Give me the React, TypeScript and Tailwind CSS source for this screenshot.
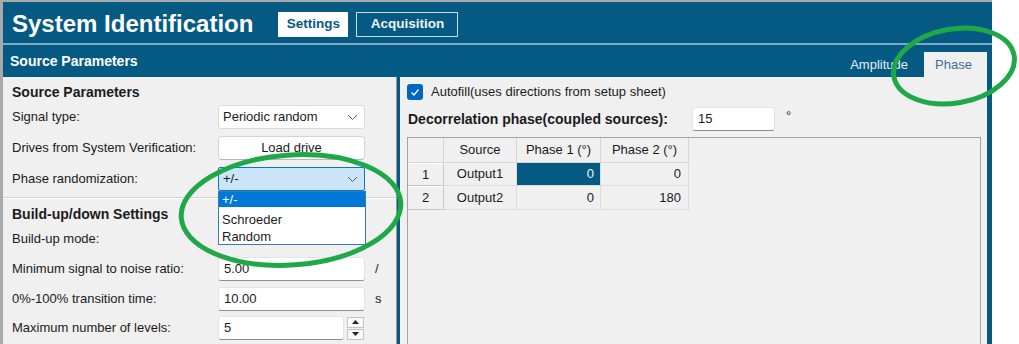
import React from 'react';

function Chevron() {
  return (
    <svg width="11" height="7" viewBox="0 0 11 7" className="shrink-0">
      <polyline points="1,1 5.5,5.5 10,1" fill="none" stroke="#5c5c5c" strokeWidth="1" />
    </svg>
  );
}

function Row({ label, children, suffix, className = '' }: { label: string; children?: React.ReactNode; suffix?: string; className?: string }) {
  return (
    <div className={`flex items-center h-[24px] ${className}`}>
      <span className="w-[206px] shrink-0">{label}</span>
      <div className="w-[147px] h-full relative">{children}</div>
      {suffix && <span className="ml-[10px]">{suffix}</span>}
    </div>
  );
}

function TextInput({ value }: { value: string }) {
  return (
    <div className="h-full w-full bg-white rounded-[3px] border border-[#e4e4e4] border-b-[#8e8e8e] flex items-center pl-[5px]">
      {value}
    </div>
  );
}

export default function App() {
  const cols = ['w-[36px]', 'w-[73px]', 'w-[84px]', 'w-[88px]'];
  const rows = [
    { n: '1', src: 'Output1', p1: '0', p2: '0', sel: true },
    { n: '2', src: 'Output2', p1: '0', p2: '180', sel: false },
  ];

  return (
    <div className="relative w-[1019px] h-[344px] bg-white overflow-hidden font-[family-name:'Liberation_Sans',Arial,sans-serif] text-[13px] text-[#1b1b1b]">
      <div className="w-[992px] h-full border-t-2 border-l-[3px] border-[#a9a9a9] bg-[#055a84] flex flex-col">
        {/* Header */}
        <div className="h-[41px] shrink-0 flex items-start pt-[8px] pl-[9px]">
          <h1 className="text-[24px] leading-[28px] font-bold text-white">System Identification</h1>
          <div className="ml-[25px] mt-[2px] flex gap-[8px]">
            <button className="w-[70px] h-[25px] bg-white text-[#055a84] font-bold text-[13.5px]">Settings</button>
            <button className="w-[102px] h-[25px] border-[1.5px] border-[#c9dbe6] text-[#eef4f8] font-bold text-[13.5px]">Acquisition</button>
          </div>
        </div>
        <div className="h-[2px] shrink-0 bg-[#7fa7c1]" />

        {/* Section bar */}
        <div className="h-[32px] shrink-0 flex items-end justify-between pr-[5px]">
          <span className="self-center pl-[7px] text-[14px] font-bold text-white">Source Parameters</span>
          <div className="flex items-end gap-[6px]">
            <span className="h-[25px] px-[10px] flex items-center text-[#e6eef4]">Amplitude</span>
            <span className="h-[25px] w-[63px] pl-[11px] flex items-center bg-[#f0f0f0] text-[#3c6f96]">Phase</span>
          </div>
        </div>

        {/* Content */}
        <div className="flex-1 flex pr-[5px] min-h-0">
          {/* Left panel */}
          <div className="w-[394px] shrink-0 bg-[#f0f0f0] border-r border-[#9a9a9a] px-[9px] pt-[6px]">
            <div className="h-[18px] leading-[18px] text-[14px] font-bold">Source Parameters</div>
            <Row label="Signal type:" className="mt-[4px]">
              <div className="h-full bg-white rounded-[3px] border border-[#dadada] flex items-center justify-between pl-[4px] pr-[6px]">
                Periodic random <Chevron />
              </div>
            </Row>
            <Row label="Drives from System Verification:" className="mt-[7px]">
              <div className="h-full bg-white rounded-[4px] border border-[#d4d4d4] border-b-[#b8b8b8] flex items-center justify-center">
                Load drive
              </div>
            </Row>
            <Row label="Phase randomization:" className="mt-[7px]">
              <div className="h-full bg-[#cce4f7] rounded-[2px] border border-[#0078d7] flex items-center justify-between pl-[4px] pr-[6px]">
                +/- <Chevron />
              </div>
              <div className="absolute left-0 top-[24px] w-[148px] z-10 bg-white border border-[#3c78b5]">
                <div className="h-[15px] flex items-center pl-[3px] bg-[#0078d7] text-white">+/-</div>
                <div className="h-[18px] mt-[4px] leading-[18px] pl-[3px]">Schroeder</div>
                <div className="h-[15px] leading-[15px] pl-[3px]">Random</div>
              </div>
            </Row>
            <div className="-mx-[9px] mt-[6px] h-[2px] border-t border-[#d3d3d3] bg-white" />
            <div className="mt-[6px] h-[18px] leading-[18px] text-[14px] font-bold">Build-up/down Settings</div>
            <Row label="Build-up mode:" className="mt-[4px]" />
            <Row label="Minimum signal to noise ratio:" className="mt-[6px]" suffix="/">
              <TextInput value="5.00" />
            </Row>
            <Row label="0%-100% transition time:" className="mt-[6px]" suffix="s">
              <TextInput value="10.00" />
            </Row>
            <div className="flex items-center h-[24px] mt-[5px]">
              <span className="w-[206px] shrink-0">Maximum number of levels:</span>
              <div className="w-[126px] h-full">
                <TextInput value="5" />
              </div>
              <div className="ml-[3px] w-[17px] h-[23px] flex flex-col gap-px">
                <div className="flex-1 bg-[#fafafa] border border-[#c4c4c4] flex items-center justify-center">
                  <svg width="7" height="4" viewBox="0 0 7 4"><polygon points="0,4 3.5,0 7,4" fill="#222" /></svg>
                </div>
                <div className="flex-1 bg-[#fafafa] border border-[#c4c4c4] flex items-center justify-center">
                  <svg width="7" height="4" viewBox="0 0 7 4"><polygon points="0,0 3.5,4 7,0" fill="#222" /></svg>
                </div>
              </div>
            </div>
          </div>

          {/* Divider */}
          <div className="w-[3px] shrink-0" />

          {/* Right panel */}
          <div className="flex-1 bg-[#f0f0f0] pl-[7px] pt-[6px] pr-[6px] flex flex-col min-w-0">
            <div className="h-[17px] flex items-center gap-[8px]">
              <span className="w-[16px] h-[16px] rounded-[3px] bg-[#0067c0] flex items-center justify-center">
                <svg width="12" height="12" viewBox="0 0 12 12">
                  <polyline points="2.5,6.5 5,9 9.5,3.5" fill="none" stroke="#fff" strokeWidth="1.3" />
                </svg>
              </span>
              <span>Autofill(uses directions from setup sheet)</span>
            </div>
            <div className="mt-[7px] h-[24px] flex items-center">
              <span className="w-[285px] pl-px shrink-0 text-[14px] font-bold">Decorrelation phase(coupled sources):</span>
              <div className="w-[83px] h-full">
                <TextInput value="15" />
              </div>
              <span className="ml-[11px] -mt-[6px]">°</span>
            </div>
            <div className="mt-[6px] flex-1 border border-[#a3a3a3] border-b-0 bg-[#f0f0f0]">
              <div className="flex h-[25px]">
                {['', 'Source', 'Phase 1 (°)', 'Phase 2 (°)'].map((h, i) => (
                  <div key={i} className={`${cols[i]} flex items-center justify-center border-r border-b border-[#d6d6d6] bg-[#f0f0f0]`}>
                    {h}
                  </div>
                ))}
              </div>
              {rows.map((r) => (
                <div key={r.n} className={`flex ${r.n === '1' ? 'h-[23px]' : 'h-[24px]'}`}>
                  <div className={`${cols[0]} flex items-center justify-center border-r border-b border-[#c8c8c8] border-t border-t-white`}>{r.n}</div>
                  <div className={`${cols[1]} flex items-center justify-center border-r border-b border-[#dcdcdc]`}>{r.src}</div>
                  <div className={`${cols[2]} flex items-center justify-end pr-[6px] border-r border-b border-[#dcdcdc] ${r.sel ? 'bg-[#055a84] text-[#eef4f8]' : ''}`}>{r.p1}</div>
                  <div className={`${cols[3]} flex items-center justify-end pr-[7px] border-r border-b border-[#dcdcdc]`}>{r.p2}</div>
                </div>
              ))}
            </div>
          </div>
        </div>
      </div>

      {/* Annotation ellipses drawn over the screenshot */}
      <svg className="absolute inset-0 pointer-events-none" width="1019" height="344" viewBox="0 0 1019 344">
        <ellipse cx="291" cy="210" rx="110" ry="55" transform="rotate(-4 291 210)" fill="none" stroke="#1fa847" strokeWidth="5" />
        <ellipse cx="954" cy="66" rx="61" ry="37" transform="rotate(-10 954 66)" fill="none" stroke="#1fa847" strokeWidth="5" />
      </svg>
    </div>
  );
}
